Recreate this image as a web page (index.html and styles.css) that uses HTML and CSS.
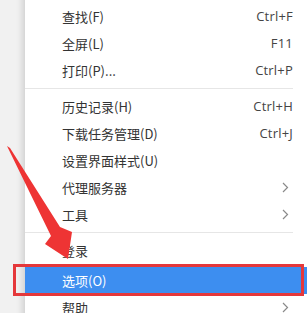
FILE: index.html
```html
<!DOCTYPE html>
<html lang="zh-CN">
<head>
    <meta charset="UTF-8">
    <title>菜单</title>
    <link rel="stylesheet" href="styles.css">
</head>
<body>
    <div class="menu">
        <div class="menu-item"><span>网页另存为(A)...</span><span class="key">Ctrl+S</span></div>
        <div class="menu-item"><span>查找(F)</span><span class="key">Ctrl+F</span></div>
        <div class="menu-item"><span>全屏(L)</span><span class="key">F11</span></div>
        <div class="menu-item"><span>打印(P)...</span><span class="key">Ctrl+P</span></div>
        <div class="sep"></div>
        <div class="menu-item"><span>历史记录(H)</span><span class="key">Ctrl+H</span></div>
        <div class="menu-item"><span>下载任务管理(D)</span><span class="key">Ctrl+J</span></div>
        <div class="menu-item"><span>设置界面样式(U)</span></div>
        <div class="menu-item"><span>代理服务器</span><svg class="more" width="7" height="11" viewBox="0 0 7 11"><polyline points="1,1 5.5,5.5 1,10" fill="none" stroke="#8a8a8a" stroke-width="1.2"/></svg></div>
        <div class="menu-item"><span>工具</span><svg class="more" width="7" height="11" viewBox="0 0 7 11"><polyline points="1,1 5.5,5.5 1,10" fill="none" stroke="#8a8a8a" stroke-width="1.2"/></svg></div>
        <div class="sep"></div>
        <div class="menu-item"><span>登录</span></div>
        <div class="menu-item active"><span>选项(O)</span></div>
        <div class="menu-item"><span>帮助</span><svg class="more" width="7" height="11" viewBox="0 0 7 11"><polyline points="1,1 5.5,5.5 1,10" fill="none" stroke="#8a8a8a" stroke-width="1.2"/></svg></div>
    </div>

    <!-- annotation overlays -->
    <div class="mark-box"></div>
    <svg class="mark-arrow" width="307" height="313" viewBox="0 0 307 313">
        <polygon points="7,146 10,148 60,227 72,232 68,259 45,244 51,236" fill="#ee3434"/>
    </svg>
</body>
</html>
```

FILE: styles.css
```css
body {
    margin: 0;
    height: 313px;
    overflow: hidden;
    background: #f1f1f1;
    font-family: "Noto Sans CJK SC", "Noto Sans", sans-serif;
    font-size: 13px;
    color: #333;
    position: relative;
}

.menu {
    margin: -24px 0 0 25px;
    padding-right: 14px;
    background: #fff;
    box-shadow: -3px 0 6px rgba(0, 0, 0, .13);
    height: 400px;
}

.menu-item {
    height: 27px;
    display: flex;
    align-items: center;
    justify-content: space-between;
    padding-left: 37px;
    line-height: 1;
}

.menu-item .key {
    font-family: "Open Sans", "Noto Sans", sans-serif;
    color: #444;
    letter-spacing: .2px;
}

.menu-item .more {
    margin-right: 4px;
}

.menu-item.active {
    margin: 3px -14px 0 0;
    padding-right: 14px;
    background: #3d8ef0;
    color: #fff;
}

.sep {
    height: 1px;
    background: #e6e6e6;
    margin: 4px 0;
}

.mark-box {
    position: absolute;
    left: 13px; top: 264px;
    width: 285px; height: 26px;
    border: 3px solid #e5383b;
}

.mark-arrow {
    position: absolute;
    left: 0; top: 0;
    pointer-events: none;
}
```
